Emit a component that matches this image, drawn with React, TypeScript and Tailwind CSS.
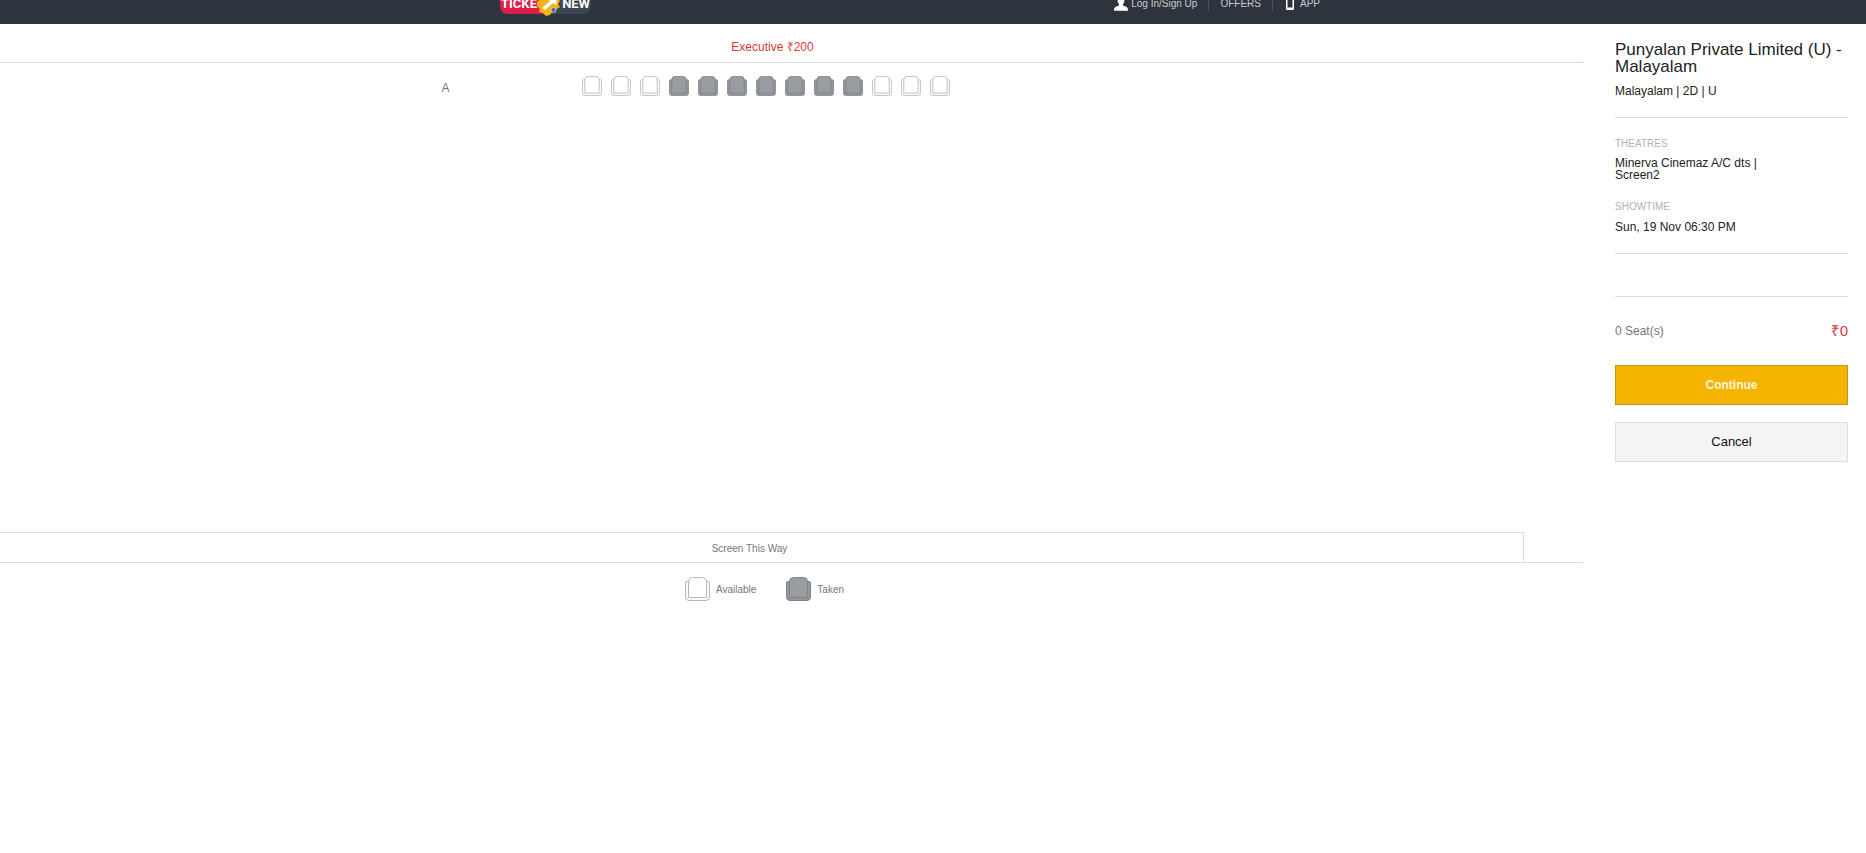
const ROW = { label: 'A', seats: [0, 0, 0, 1, 1, 1, 1, 1, 1, 1, 0, 0, 0] };

function Seat({ taken, className }: { taken: boolean; className: string }) {
  const stroke = taken ? '#7f8388' : '#b4b7bb';
  const fill = taken ? '#999ca1' : '#ffffff';
  return (
    <svg viewBox="0 0 25 24" preserveAspectRatio="none" className={className} aria-hidden="true">
      <path
        d="M3.5 4.5H1.8Q.5 4.5 .5 6V20Q.5 23.5 4 23.5H21Q24.5 23.5 24.5 20V6Q24.5 4.5 23.2 4.5H21.5"
        fill={taken ? '#94979c' : '#fafafb'}
        stroke={stroke}
      />
      <path d="M3.5 20.5V4.5Q3.5 .5 7.5 .5H17.5Q21.5 .5 21.5 4.5V20.5Z" fill={fill} stroke={stroke} />
    </svg>
  );
}

function Logo() {
  return (
    <a
      href="#home"
      aria-label="TicketNew"
      className="relative flex h-[22px] w-[91px] shrink-0 rounded-lg font-[Roboto,sans-serif] text-[13px] leading-[24px] font-bold text-white"
    >
      <span className="w-12 rounded-l-lg bg-[#df1f4b] pl-px">TICKE</span>
      <span className="flex-1 rounded-r-lg bg-[#3b4554] pr-px text-right">NEW</span>
      <svg viewBox="0 0 26 24" className="absolute top-0 left-9 h-6 w-[26px]" aria-hidden="true">
        <path d="M1 10 10 3l4 1 2-3 8 8-2 3 2 3-7 4-3 4-4 1-3-3-4-1 1-3-3-3Z" fill="#f6b319" />
        <path d="m6 16 8-7-2-2 9-1-1 7-3-2-8 7Z" fill="#fff" />
        <circle cx="17.500" cy="18" r="2.500" fill="#59677e" stroke="#d7dbe2" strokeWidth=".8" />
      </svg>
    </a>
  );
}

function Header() {
  return (
    <header className="h-6 overflow-hidden bg-[#2d343e] pr-[46px]">
      <div className="mx-auto -mt-[18px] flex h-[42px] max-w-[820px] items-center justify-between">
        <Logo />
        <nav className="flex items-center text-[10px] text-[#c9ccd0]">
          <a href="#login" className="flex items-center gap-[3px] pr-[11px]">
            <svg viewBox="0 0 14 16" className="h-4 w-3.5" fill="#fff" aria-hidden="true">
              <ellipse cx="7" cy="5" rx="3.4" ry="4.5" />
              <path d="M5 8h4v2.5l3.3 1.2Q14 12.400 14 15v.7H0V15q0-2.600 1.700-3.300L5 10.500Z" />
            </svg>
            Log In/Sign Up
          </a>
          <a href="#offers" className="border-x border-[#4b525c] px-[11px]">OFFERS</a>
          <a href="#app" className="flex items-center gap-1.5 pl-[13px]">
            <svg viewBox="0 0 8 13" className="h-[13px] w-2" aria-hidden="true">
              <path fillRule="evenodd" fill="#fff" d="M1 0h6q1 0 1 1v11q0 1-1 1H1q-1 0-1-1V1q0-1 1-1Zm.5 2v8.500h5V2Z" />
            </svg>
            APP
          </a>
        </nav>
      </div>
    </header>
  );
}

function SeatMap() {
  return (
    <main className="min-w-0 flex-1">
      <h2 className="h-[39px] border-b border-[#dcdcdc] pr-[38px] text-center text-[12px] leading-[46px] text-[#d93a3a]">
        Executive ₹200
      </h2>
      <div className="flex h-[469px] items-start justify-center pt-[13px] pr-[192px]">
        <div className="w-[140px] pt-1 text-[12px] leading-4 text-[#777]">{ROW.label}</div>
        <div className="flex gap-[9px]">
          {ROW.seats.map((taken, i) => (
            <button key={i} type="button" disabled={taken === 1} aria-label={`${ROW.label}${i + 1}`} className="block">
              <Seat taken={taken === 1} className="block h-5 w-5" />
            </button>
          ))}
        </div>
      </div>
      <div className="border-b border-[#dcdcdc]">
        <div className="mr-[59px] h-[30px] border-t border-r border-[#dcdcdc] pr-6 text-center text-[10px] leading-[31px] text-[#777]">
          Screen This Way
        </div>
      </div>
      <div className="flex justify-center gap-[30px] pt-3.5 pr-[54px] text-[10px] text-[#777]">
        <div className="flex items-center gap-1.5">
          <Seat taken={false} className="h-6 w-[25px]" />
          Available
        </div>
        <div className="flex items-center gap-1.5">
          <Seat taken className="h-6 w-[25px]" />
          Taken
        </div>
      </div>
    </main>
  );
}

function Summary() {
  return (
    <aside className="w-[283px] shrink-0 pt-[17px] pr-[18px] pl-8 text-[12px] leading-3 text-[#222]">
      <section className="h-[77px] border-b border-[#dcdcdc]">
        <h1 className="text-[17px] leading-[17px]">Punyalan Private Limited (U) - Malayalam</h1>
        <p className="pt-2.5">Malayalam | 2D | U</p>
      </section>
      <section className="h-[136px] border-b border-[#dcdcdc] pt-5">
        <h3 className="text-[10px] text-[#b3b3b3]">THEATRES</h3>
        <p className="max-w-40 pt-[7px]">Minerva Cinemaz A/C dts | Screen2</p>
        <h3 className="pt-5 text-[10px] text-[#b3b3b3]">SHOWTIME</h3>
        <p className="pt-2">Sun, 19 Nov 06:30 PM</p>
      </section>
      <div className="h-[43px] border-b border-[#dcdcdc]" />
      <div className="flex h-[68px] items-center justify-between">
        <span className="text-[#777]">0 Seat(s)</span>
        <span className="text-[15px] text-[#d93a3a]">₹0</span>
      </div>
      <button type="button" className="block h-10 w-full border border-[#c4950f] bg-[#f5b400] text-[12px] font-bold text-[#fdf6df]">
        Continue
      </button>
      <button type="button" className="mt-[17px] block h-10 w-full border border-[#dedede] bg-[#f4f4f4] text-[13px] text-[#111]">
        Cancel
      </button>
    </aside>
  );
}

export default function App() {
  return (
    <div className="min-h-screen bg-white font-['Liberation_Sans',Arial,sans-serif]">
      <Header />
      <div className="flex">
        <SeatMap />
        <Summary />
      </div>
    </div>
  );
}
